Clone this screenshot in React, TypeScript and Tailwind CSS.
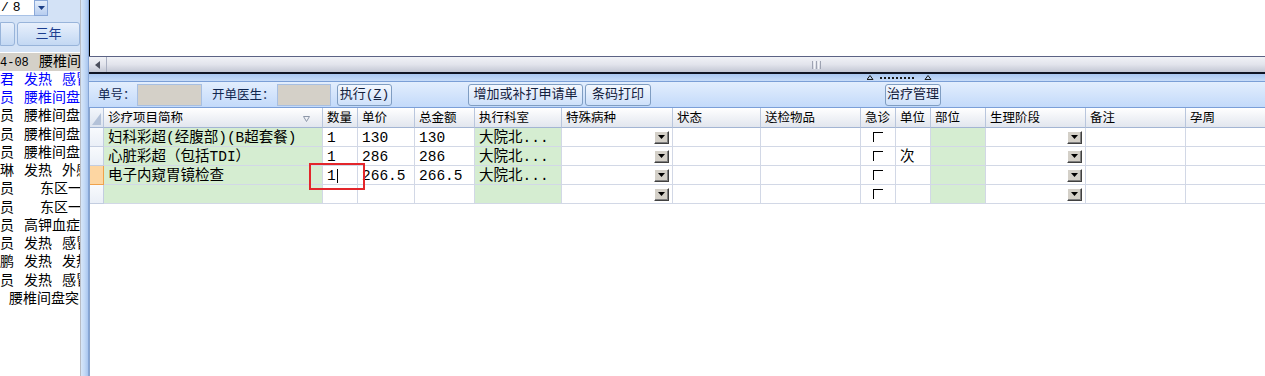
import React from 'react';

const Drop = () => (
  <div className="ml-auto mr-[3px] w-[15px] h-[13px] bg-[#d4d0c8] border border-t-white border-l-white border-r-[#404040] border-b-[#404040] shadow-[inset_-1px_-1px_0_#808080] flex items-center justify-center shrink-0">
    <svg width="7" height="4" viewBox="0 0 7 4"><path d="M0 0H7L3.5 4Z" fill="#000" /></svg>
  </div>
);

const Check = () => (
  <div className="mx-auto w-[10px] h-[10px] border-l border-t border-black" />
);

type RowData = {
  name: string;
  qty: string;
  price: string;
  total: string;
  dept: string;
  unit: string;
  current?: boolean;
};

const rows: RowData[] = [
  { name: '妇科彩超(经腹部)(B超套餐)', qty: '1', price: '130', total: '130', dept: '大院北...', unit: '' },
  { name: '心脏彩超（包括TDI）', qty: '1', price: '286', total: '286', dept: '大院北...', unit: '次' },
  { name: '电子内窥胃镜检查', qty: '1', price: '266.5', total: '266.5', dept: '大院北...', unit: '', current: true },
  { name: '', qty: '', price: '', total: '', dept: '', unit: '' },
];

const headers = ['诊疗项目简称', '数量', '单价', '总金额', '执行科室', '特殊病种', '状态', '送检物品', '急诊', '单位', '部位', '生理阶段', '备注', '孕周'];

const cell = 'h-[19px] border-r border-b border-[#d2d8e6] px-[4px] flex items-center text-[14.5px] whitespace-nowrap overflow-hidden';
const green = 'bg-[#d5edd1]';

const LeftRow = ({ children, className = '' }: { children: React.ReactNode; className?: string }) => (
  <div className={`h-[18.25px] flex items-center whitespace-pre overflow-hidden text-[14px] ${className}`}>{children}</div>
);

const Name = ({ w, children }: { w: string; children?: React.ReactNode }) => (
  <span className={`shrink-0 ${w}`}>{children}</span>
);

const Btn = ({ children, className = '' }: { children: React.ReactNode; className?: string }) => (
  <div className={`h-[22px] pt-[1px] border border-[#7f9dc2] rounded-[3px] bg-linear-to-b from-[#f4f8fe] to-[#cde0fa] flex items-center justify-center text-[13px] text-[#14213d] shrink-0 whitespace-nowrap ${className}`}>{children}</div>
);

export default function App() {
  return (
    <div className="w-[1265px] h-[376px] flex overflow-hidden bg-white font-['Liberation_Mono','Noto_Sans_CJK_SC',monospace] text-black">
      {/* Left panel */}
      <div className="w-[81px] h-full flex flex-col border-r border-[#b8bcc4] shrink-0 overflow-hidden">
        <div className="bg-[#d3e2f6] h-[52px] flex flex-col">
          <div className="flex h-[16px]">
            <div className="w-[34px] h-[16px] bg-white border-b border-[#a9c2e6] text-[13px] leading-[15px] pl-[1px] flex">
              <span>/</span><span className="ml-[4px]">8</span>
            </div>
            <div className="w-[14px] h-[16px] border border-[#8aa8d8] bg-linear-to-b from-[#e4eefb] to-[#b7cdef] flex items-center justify-center">
              <svg width="7" height="4" viewBox="0 0 7 4"><path d="M0 0H7L3.5 4Z" fill="#1c3f86" /></svg>
            </div>
          </div>
          <div className="flex mt-[6px] h-[24px] gap-[2px]">
            <div className="w-[15px] h-full border border-[#98b4da] rounded-r-[3px] bg-linear-to-b from-[#e8f0fc] to-[#c3d8f3]" />
            <div className="w-[63px] h-full pt-[1px] border border-[#98b4da] rounded-[3px] bg-linear-to-b from-[#e8f0fc] to-[#c3d8f3] flex items-center justify-center text-[13px] text-[#1b3d8f]">三年</div>
          </div>
        </div>
        <div className="flex-1 flex flex-col pt-[1px] bg-white">
          <LeftRow className="bg-[#d4d0c8]"><Name w="w-[39px]"><span className="text-[12px]">4-08</span></Name>腰椎间盘突出</LeftRow>
          <LeftRow className="text-[#0000ff]"><Name w="w-[24px]">君</Name>发热<span className="ml-[10px]">感冒</span></LeftRow>
          <LeftRow className="text-[#0000ff]"><Name w="w-[24px]">员</Name>腰椎间盘突出</LeftRow>
          <LeftRow><Name w="w-[24px]">员</Name>腰椎间盘突出</LeftRow>
          <LeftRow><Name w="w-[24px]">员</Name>腰椎间盘突出</LeftRow>
          <LeftRow><Name w="w-[24px]">员</Name>腰椎间盘突出</LeftRow>
          <LeftRow><Name w="w-[24px]">琳</Name>发热<span className="ml-[10px]">外感</span></LeftRow>
          <LeftRow><Name w="w-[40px]">员</Name>东区一</LeftRow>
          <LeftRow><Name w="w-[40px]">员</Name>东区一</LeftRow>
          <LeftRow><Name w="w-[24px]">员</Name>高钾血症</LeftRow>
          <LeftRow><Name w="w-[24px]">员</Name>发热<span className="ml-[10px]">感冒</span></LeftRow>
          <LeftRow><Name w="w-[24px]">鹏</Name>发热<span className="ml-[10px]">发热</span></LeftRow>
          <LeftRow><Name w="w-[24px]">员</Name>发热<span className="ml-[10px]">感冒</span></LeftRow>
          <LeftRow><Name w="w-[9px]" />腰椎间盘突出</LeftRow>
        </div>
      </div>

      {/* Splitter */}
      <div className="w-[8px] h-full shrink-0 bg-linear-to-r from-[#d7e6f8] via-[#c4daf6] to-[#aac6ee] border-r border-[#86a6d6]" />

      {/* Right panel */}
      <div className="w-[1176px] h-full flex flex-col shrink-0">
        <div className="h-[56px] bg-white border-l border-black" />
        <div className="h-[1px] bg-[#5b6284]" />
        <div className="h-[15px] flex bg-linear-to-b from-[#f1f2f7] via-[#e2e4ec] to-[#c3c7d4]">
          <div className="w-[18px] h-full border-r border-[#aab0c2] flex items-center justify-center">
            <svg width="5" height="8" viewBox="0 0 5 8"><path d="M5 0V8L0 4Z" fill="#4a4e5c" /></svg>
          </div>
          <div className="flex-1 flex items-center pl-[705px]">
            <div className="flex gap-[1px] h-[8px]">
              <div className="w-[1px] h-full bg-[#9ea3b2]" />
              <div className="w-[1px] h-full bg-[#f4f5f8]" />
              <div className="w-[1px] h-full bg-[#9ea3b2]" />
              <div className="w-[1px] h-full bg-[#f4f5f8]" />
              <div className="w-[1px] h-full bg-[#9ea3b2]" />
            </div>
          </div>
        </div>
        <div className="h-[2px] bg-[#0f1424]" />
        <div className="h-[8px] bg-linear-to-b from-[#a9c7f1] to-[#c8dcf8] border-b border-[#7b9fd6] flex items-start pt-[1px] pl-[778px]">
          <svg width="66" height="5" viewBox="0 0 66 5">
            <path d="M3 0.5L6 4.5H0Z" fill="none" stroke="#1a1a1a" strokeWidth="1" />
            {Array.from({ length: 9 }).map((_, i) => (
              <rect key={i} x={13 + i * 4} y={2} width={2} height={2} fill="#1a1a1a" />
            ))}
            <path d="M61 0.5L64 4.5H58Z" fill="none" stroke="#1a1a1a" strokeWidth="1" />
          </svg>
        </div>
        {/* Toolbar */}
        <div className="h-[25px] bg-linear-to-b from-[#e3eefd] to-[#c3dafa] flex items-center text-[12.5px] text-[#10264f]">
          <span className="ml-[9px] w-[39px] pt-[3px] shrink-0 whitespace-nowrap overflow-hidden">单号：</span>
          <div className="w-[65px] h-[22px] bg-[#d4d0c8] border border-[#a7bfe2] shrink-0" />
          <span className="ml-[10px] w-[65px] pt-[3px] shrink-0 whitespace-nowrap overflow-hidden">开单医生：</span>
          <div className="w-[54px] h-[22px] bg-[#d4d0c8] border border-[#a7bfe2] shrink-0" />
          <Btn className="ml-[6px] w-[55px]">执行(<span className="underline">Z</span>)</Btn>
          <Btn className="ml-[76px] w-[115px]">增加或补打申请单</Btn>
          <Btn className="ml-[2px] w-[66px]">条码打印</Btn>
          <Btn className="ml-[234px] w-[56px]">治疗管理</Btn>
        </div>
        <div className="h-[1px] bg-[#7b9fd8]" />

        {/* Grid */}
        <div className="flex-1 relative overflow-hidden border-l border-[#8aa4cc] bg-white">
          <div className="w-max grid grid-cols-[14px_219px_35px_57px_60px_87px_111px_88px_100px_35px_35px_55px_100px_100px_100px]">
            {/* header */}
            <div className="h-[20px] border-r border-b border-r-[#b6c4dc] border-b-[#a3b5d3] bg-linear-to-b from-[#f3f6fb] to-[#dce3ef] flex items-end justify-end p-[2px]">
              <svg width="9" height="12" viewBox="0 0 9 12"><path d="M9 0V12H0Z" fill="#b3c1d8" /></svg>
            </div>
            {headers.map((h, i) => (
              <div key={h} className="h-[20px] pt-[3px] border-r border-b border-r-[#b9c6dd] border-b-[#a3b5d3] bg-linear-to-b from-white to-[#e2e6ee] px-[4px] flex items-center text-[12.5px] whitespace-nowrap overflow-hidden">
                <span>{h}</span>
                {i === 0 && (
                  <svg className="ml-auto mr-[8px]" width="7" height="6" viewBox="0 0 7 6"><path d="M0.5 0.5H6.5L3.5 5.5Z" fill="none" stroke="#8d97a8" strokeWidth="1" /></svg>
                )}
              </div>
            ))}
            {/* rows */}
            {rows.map((r, ri) => (
              <React.Fragment key={ri}>
                <div className={`h-[19px] border-r border-b ${r.current ? 'bg-[#fdd6a2] border-[#efa24c]' : 'bg-linear-to-b from-[#f8fafd] to-[#eaeff7] border-[#c3cde0]'}`} />
                <div className={`${cell} pt-[3px] ${green}`}>{r.name}</div>
                <div className={`${cell} pt-[3px]`}>
                  {r.qty}
                  {r.current && <span className="ml-[1px] -mt-[2px] w-[1px] h-[14px] bg-black" />}
                </div>
                <div className={`${cell} pt-[3px]`}>{r.price}</div>
                <div className={`${cell} pt-[3px]`}>{r.total}</div>
                <div className={`${cell} pt-[3px] ${green}`}>{r.dept}</div>
                <div className={`${cell} pr-0`}><Drop /></div>
                <div className={cell} />
                <div className={cell} />
                <div className={cell}><Check /></div>
                <div className={`${cell} pt-[3px]`}>{r.unit}</div>
                <div className={`${cell} ${green}`} />
                <div className={`${cell} pr-0`}><Drop /></div>
                <div className={cell} />
                <div className={cell} />
              </React.Fragment>
            ))}
          </div>
          {/* red highlight box */}
          <div className="absolute left-[219px] top-[55px] w-[56px] h-[27px] border-2 border-[#e3262b]" />
        </div>
      </div>
    </div>
  );
}
